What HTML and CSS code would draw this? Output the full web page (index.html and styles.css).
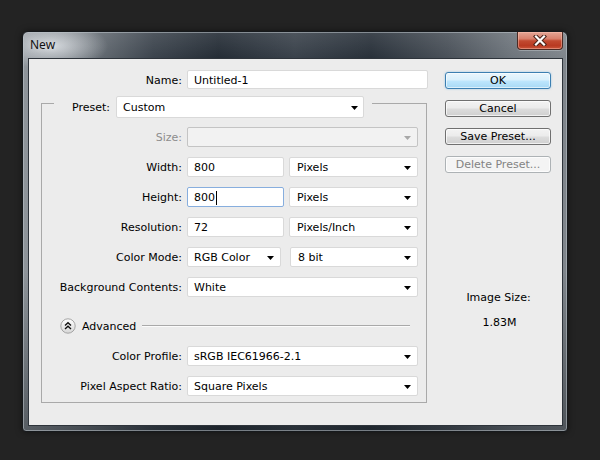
FILE: index.html
```html
<!DOCTYPE html>
<html>
<head>
<meta charset="utf-8">
<link rel="stylesheet" href="styles.css">
</head>
<body>
<div class="window">
  <div class="titlebar">
    <span class="title">New</span>
    <div class="close">
      <svg width="14" height="11" viewBox="0 0 14 11"><path d="M3 1.5 L11 9.5 M11 1.5 L3 9.5" stroke="#4a2218" stroke-width="4.2" stroke-linecap="square"/><path d="M3 1.5 L11 9.5 M11 1.5 L3 9.5" stroke="#ffffff" stroke-width="2.2" stroke-linecap="square"/></svg>
    </div>
  </div>
  <div class="client">
    <div class="left">
      <div class="row name-row">
        <span class="label name-label">Name:</span>
        <div class="field name-field">Untitled-1</div>
      </div>
      <div class="group">
        <div class="preset-row">
          <span class="label preset-label">Preset:</span>
          <div class="field select preset-field"><span>Custom</span><svg class="arrow" width="7" height="4" viewBox="0 0 7 4"><polygon points="0,0 7,0 3.5,4" fill="#000"/></svg></div>
        </div>
        <div class="row">
          <span class="label disabled">Size:</span>
          <div class="field select full disabled-field"><span></span><svg class="arrow" width="7" height="4" viewBox="0 0 7 4"><polygon points="0,0 7,0 3.5,4" fill="#a8a8a8"/></svg></div>
        </div>
        <div class="row">
          <span class="label">Width:</span>
          <div class="field num">800</div>
          <div class="field select unit"><span>Pixels</span><svg class="arrow" width="7" height="4" viewBox="0 0 7 4"><polygon points="0,0 7,0 3.5,4" fill="#000"/></svg></div>
        </div>
        <div class="row">
          <span class="label">Height:</span>
          <div class="field num focus">800<span class="caret"></span></div>
          <div class="field select unit"><span>Pixels</span><svg class="arrow" width="7" height="4" viewBox="0 0 7 4"><polygon points="0,0 7,0 3.5,4" fill="#000"/></svg></div>
        </div>
        <div class="row">
          <span class="label">Resolution:</span>
          <div class="field num">72</div>
          <div class="field select unit"><span>Pixels/Inch</span><svg class="arrow" width="7" height="4" viewBox="0 0 7 4"><polygon points="0,0 7,0 3.5,4" fill="#000"/></svg></div>
        </div>
        <div class="row">
          <span class="label">Color Mode:</span>
          <div class="field select mode"><span>RGB Color</span><svg class="arrow" width="7" height="4" viewBox="0 0 7 4"><polygon points="0,0 7,0 3.5,4" fill="#000"/></svg></div>
          <div class="field select bits"><span>8 bit</span><svg class="arrow" width="7" height="4" viewBox="0 0 7 4"><polygon points="0,0 7,0 3.5,4" fill="#000"/></svg></div>
        </div>
        <div class="row">
          <span class="label">Background Contents:</span>
          <div class="field select full"><span>White</span><svg class="arrow" width="7" height="4" viewBox="0 0 7 4"><polygon points="0,0 7,0 3.5,4" fill="#000"/></svg></div>
        </div>
        <div class="advanced">
          <svg class="adv-icon" width="16" height="16" viewBox="0 0 16 16">
            <defs><linearGradient id="g" x1="0" y1="0" x2="0" y2="1"><stop offset="0" stop-color="#ffffff"/><stop offset="1" stop-color="#d6d6d6"/></linearGradient></defs>
            <circle cx="8" cy="8" r="7.2" fill="url(#g)" stroke="#a4a4a4" stroke-width="1"/>
            <path d="M5 7.5 L8 4.8 L11 7.5 M5 11 L8 8.3 L11 11" fill="none" stroke="#111" stroke-width="1.4"/>
          </svg>
          <span class="adv-text">Advanced</span>
          <div class="adv-line"></div>
        </div>
        <div class="row">
          <span class="label">Color Profile:</span>
          <div class="field select full"><span>sRGB IEC61966-2.1</span><svg class="arrow" width="7" height="4" viewBox="0 0 7 4"><polygon points="0,0 7,0 3.5,4" fill="#000"/></svg></div>
        </div>
        <div class="row">
          <span class="label">Pixel Aspect Ratio:</span>
          <div class="field select full"><span>Square Pixels</span><svg class="arrow" width="7" height="4" viewBox="0 0 7 4"><polygon points="0,0 7,0 3.5,4" fill="#000"/></svg></div>
        </div>
      </div>
    </div>
    <div class="right">
      <div class="btn default">OK</div>
      <div class="btn">Cancel</div>
      <div class="btn">Save Preset...</div>
      <div class="btn off">Delete Preset...</div>
      <div class="size-label">Image Size:</div>
      <div class="size-value">1.83M</div>
    </div>
  </div>
</div>
</body>
</html>
```

FILE: styles.css
```css
* { box-sizing: border-box; }
html, body { margin: 0; padding: 0; }
body {
  width: 600px;
  height: 460px;
  background: #232323;
  overflow: hidden;
  font-family: "DejaVu Sans", Verdana, sans-serif;
  font-size: 11px;
  color: #000;
}
.window {
  margin: 31px 0 0 22px;
  width: 546px;
  height: 401px;
  border: 1px solid #16191c;
  border-radius: 6px 6px 4px 4px;
  padding: 0 4px 5px 5px;
  background:
    linear-gradient(180deg, rgba(255,255,255,0.10) 0px, rgba(255,255,255,0) 26px, rgba(0,0,0,0) 60%, rgba(20,26,32,0.45) 100%),
    radial-gradient(ellipse 55px 24px at 30px 14px, rgba(225,229,233,0.85), rgba(215,220,225,0) 100%),
    linear-gradient(90deg, #8f959b 0%, #6a7178 12%, #3c444d 24%, #252d36 36%, #3a424b 50%, #29313a 64%, #4a5159 78%, #6e757c 90%, #80868c 100%);
  box-shadow: inset 0 0 0 1px rgba(190,196,202,0.55), 0 0 6px rgba(0,0,0,0.5);
}
.titlebar {
  height: 26px;
  display: flex;
  align-items: flex-start;
}
.title {
  margin: 5px 0 0 2px;
  font-family: "Noto Sans", "DejaVu Sans", sans-serif;
  font-size: 12px;
  line-height: 16px;
  color: #111;
  text-shadow: 0 0 6px rgba(255,255,255,0.6);
}
.close {
  margin-left: auto;
  width: 46px;
  height: 18px;
  border: 1px solid #4b2a24;
  border-top: none;
  border-radius: 0 0 4px 4px;
  background: linear-gradient(180deg, #e3a595 0%, #d7806c 40%, #c24a31 52%, #b93a22 80%, #c9553a 100%);
  box-shadow: inset 0 0 0 1px rgba(255,200,185,0.45), 0 1px 0 rgba(220,225,230,0.35);
  display: flex;
  align-items: center;
  justify-content: center;
}
.client {
  width: 535px;
  height: 368px;
  border: 1px solid #2e343b;
  background: #ececec;
  display: flex;
}
.left {
  width: 416px;
}
.row {
  display: flex;
  align-items: center;
  height: 20px;
  margin-top: 10px;
}
.label {
  width: 140px;
  height: 20px;
  flex: none;
  text-align: right;
  margin-right: 5px;
  white-space: nowrap;
  line-height: 22px;
}
.label.disabled { color: #8c8c8c; }
.name-row {
  margin-top: 11px;
  height: 19px;
}
.name-label { width: 153px; }
.field {
  height: 20px;
  background: #fff;
  border: 1px solid #d9d9d9;
  border-radius: 2px;
  padding: 2px 0 0 6px;
  line-height: 16px;
  white-space: nowrap;
  display: flex;
  align-items: center;
}
.name-field { width: 241px; height: 19px; }
.select { padding-right: 6px; }
.select .arrow { margin-left: auto; flex: none; }
.full { width: 231px; }
.num { width: 97px; }
.unit { width: 129px; margin-left: 5px; padding-left: 7px; }
.mode { width: 94px; }
.bits { width: 128px; margin-left: 9px; padding-left: 7px; }
.focus { border-color: #87aede; }
.caret {
  display: inline-block;
  width: 1px;
  height: 14px;
  background: #000;
  margin-left: 1px;
}
.disabled-field {
  background: #f2f2f2;
  border-color: #c4c4c4;
}
.group {
  margin: 14px 0 0 12px;
  width: 386px;
  border: 1px solid #a9a9a9;
  padding: 0 0 6px 0;
}
.preset-row {
  margin: -8px 0 0 12px;
  width: 318px;
  height: 22px;
  background: #ececec;
  display: flex;
  align-items: center;
  padding-right: 8px;
}
.preset-label { width: 56px; margin-right: 6px; }
.preset-field { width: 248px; height: 22px; padding-right: 5px; }
.preset-row + .row { margin-top: 9px; }
.advanced {
  display: flex;
  align-items: center;
  height: 20px;
  margin-top: 19px;
  padding-left: 18px;
  margin-bottom: 9px;
}
.adv-icon { flex: none; }
.adv-text { margin-left: 6px; padding-top: 1px; }
.adv-line {
  flex: 1;
  height: 2px;
  margin: 0 16px 0 6px;
  border-top: 1px solid #a9a9a9;
  border-bottom: 1px solid #fbfbfb;
}
.right {
  width: 106px;
  padding-top: 13px;
  display: flex;
  flex-direction: column;
  align-items: stretch;
}
.btn {
  height: 17px;
  margin-bottom: 11px;
  border: 1px solid #707070;
  border-radius: 3px;
  text-align: center;
  line-height: 16px;
  background: linear-gradient(180deg, #f3f3f3 0%, #ebebeb 48%, #dddddd 52%, #cfcfcf 100%);
  box-shadow: inset 0 0 0 1px rgba(255,255,255,0.7);
}
.btn.default {
  border-color: #3c7fb1;
  background: linear-gradient(180deg, #eaf6fd 0%, #d9f0fc 48%, #bee6fd 52%, #a7d9f5 100%);
  box-shadow: inset 0 0 0 1px rgba(255,255,255,0.6), 0 0 2px rgba(60,160,230,0.5);
}
.btn.off {
  border-color: #adb2b5;
  background: #f4f4f4;
  color: #838383;
}
.size-label {
  margin-top: 107px;
  text-align: center;
  line-height: 14px;
  padding-left: 1px;
}
.size-value {
  margin-top: 11px;
  text-align: center;
  line-height: 14px;
  padding-left: 3px;
}
```
